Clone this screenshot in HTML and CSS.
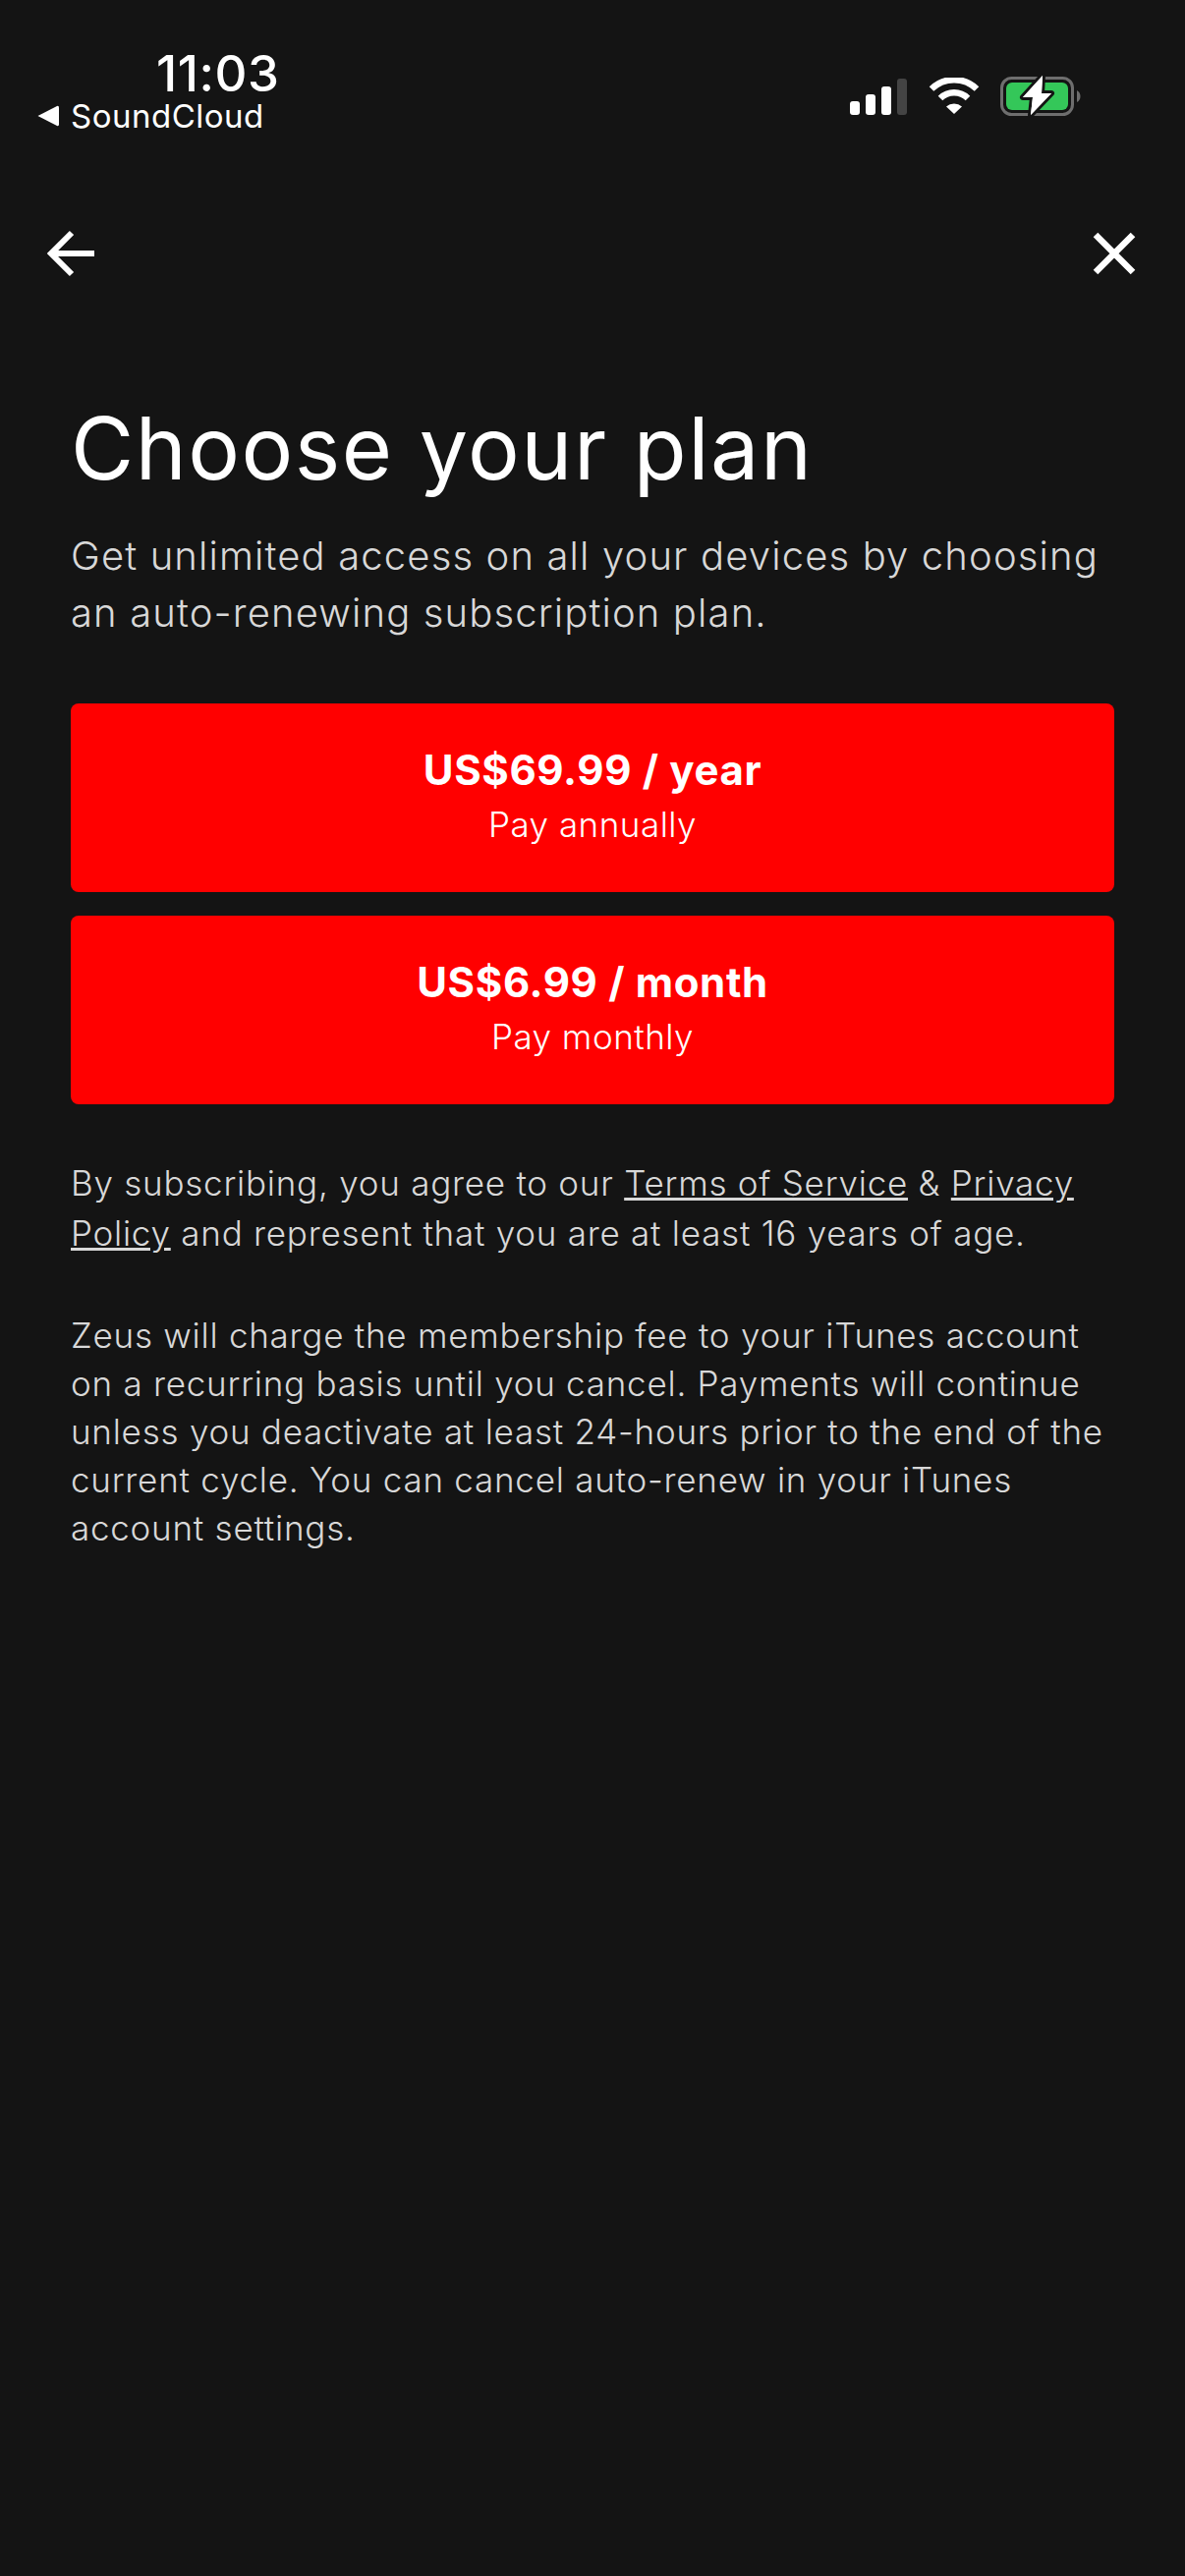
FILE: index.html
```html
<!DOCTYPE html>
<html lang="en">
<head>
    <meta charset="UTF-8">
    <meta name="viewport" content="width=device-width, initial-scale=1.0">
    <title>Choose your plan</title>
    <link rel="stylesheet" href="styles.css">
</head>
<body>
    <div class="status-bar">
        <div class="status-left">
            <div class="time">11:03</div>
            <div class="back-app">
                <svg class="back-triangle" width="22" height="22" viewBox="0 0 22 22"><path d="M0.5 11 L20 1 Q22 0.3 22 2.500 V19.500 Q22 21.700 20 21 Z" fill="#fff"/></svg>
                <span>SoundCloud</span>
            </div>
        </div>
        <div class="status-icons">
            <svg width="60" height="38" viewBox="0 0 60 38">
                <rect x="1" y="24" width="10" height="14" rx="3" fill="#fff"/>
                <rect x="17" y="17" width="10" height="21" rx="3" fill="#fff"/>
                <rect x="33" y="9" width="10" height="29" rx="3" fill="#fff"/>
                <rect x="49" y="1" width="10" height="37" rx="3" fill="#444"/>
            </svg>
            <svg width="52" height="38" viewBox="0 0 52 38">
                <path d="M3 11.5 A33 33 0 0 1 49 11.5" fill="none" stroke="#fff" stroke-width="6.5"/>
                <path d="M12 21 A20 20 0 0 1 40 21" fill="none" stroke="#fff" stroke-width="6.5"/>
                <path d="M26 37 L18 29.5 A12 12 0 0 1 34 29.5 Z" fill="#fff"/>
            </svg>
            <svg class="battery" width="82" height="40" viewBox="0 0 82 40">
                <rect x="1.5" y="1.5" width="72" height="37" rx="10" fill="none" stroke="#6e6e6e" stroke-width="3"/>
                <rect x="6" y="6" width="63" height="28" rx="6" fill="#34c759"/>
                <path d="M78 14 Q81.500 16 81.500 20 Q81.500 24 78 26 Z" fill="#6e6e6e"/>
                <path d="M43 -1 L23 21 H33 L31 39 L52 17 H42 Z" fill="#fff" stroke="#141414" stroke-width="6" stroke-linejoin="round" paint-order="stroke"/>
                <path d="M43 -1 L23 21 H33 L31 39 L52 17 H42 Z" fill="#fff"/>
            </svg>
        </div>
    </div>

    <div class="nav">
        <svg width="50" height="48" viewBox="0 0 50 48"><path d="M25 3 L4 24 L25 45 M4 24 H48" fill="none" stroke="#fff" stroke-width="6"/></svg>
        <svg width="44" height="44" viewBox="0 0 44 44"><path d="M3 3 L41 41 M41 3 L3 41" fill="none" stroke="#fff" stroke-width="6.500"/></svg>
    </div>

    <div class="content">
        <h1>Choose your plan</h1>
        <p class="intro">Get unlimited access on all your devices by choosing an auto-renewing subscription plan.</p>

        <div class="plans">
            <button class="plan">
                <span class="plan-price">US$69.99 / year</span>
                <span class="plan-note">Pay annually</span>
            </button>
            <button class="plan">
                <span class="plan-price">US$6.99 / month</span>
                <span class="plan-note">Pay monthly</span>
            </button>
        </div>

        <p class="legal legal-terms">By subscribing, you agree to our <a href="#">Terms of Service</a> &amp; <a href="#">Privacy</a> <a href="#">Policy</a> and represent that you are at least 16 years of age.</p>
        <p class="legal">Zeus will charge the membership fee to your iTunes account on a recurring basis until you cancel. Payments will continue unless you deactivate at least 24-hours prior to the end of the current cycle. You can cancel auto-renew in your iTunes account settings.</p>
    </div>
</body>
</html>
```

FILE: styles.css
```css
html, body {
    height: 100%;
}
body {
    margin: 0;
    background-color: #141414;
    color: #fff;
    font-family: Inter, "Liberation Sans", sans-serif;
}
.status-bar {
    display: flex;
    justify-content: space-between;
    align-items: flex-start;
    padding: 50px 106px 0 38px;
    height: 150px;
    box-sizing: border-box;
}
.status-left {
    display: flex;
    flex-direction: column;
    align-items: flex-start;
}
.time {
    margin-left: 121px;
    font-size: 51px;
    line-height: 50px;
    font-weight: 500;
    letter-spacing: 0.6px;
}
.back-app {
    display: flex;
    align-items: center;
    gap: 12px;
    font-size: 33px;
    line-height: 36px;
    letter-spacing: 0.5px;
}
.status-icons {
    display: flex;
    align-items: center;
    gap: 21px;
    margin-top: 28px;
}
.battery {
    overflow: visible;
}
.nav {
    display: flex;
    justify-content: space-between;
    align-items: center;
    padding: 84px 50px 0 48px;
}
.content {
    padding: 0 72px;
}
h1 {
    margin: 122px 0 0;
    font-size: 88px;
    line-height: 104px;
    font-weight: 400;
    letter-spacing: 1.5px;
}
.intro {
    margin: 29px 0 0;
    font-size: 40px;
    line-height: 58px;
    font-weight: 300;
    color: #d8d8d8;
    letter-spacing: 1.14px;
}
.plans {
    display: flex;
    flex-direction: column;
    gap: 24px;
    margin-top: 63px;
    margin-bottom: 55px;
}
.plan {
    display: flex;
    flex-direction: column;
    align-items: center;
    justify-content: center;
    width: 100%;
    height: 192px;
    padding: 0 0 3px;
    border: none;
    border-radius: 8px;
    background-color: #f00;
    color: #fff;
    font-family: inherit;
}
.plan-price {
    font-size: 42px;
    line-height: 56px;
    font-weight: 700;
    letter-spacing: 0.65px;
}
.plan-note {
    font-size: 35px;
    line-height: 54px;
    font-weight: 300;
    letter-spacing: 0.5px;
}
.legal {
    margin: 0 0 57px;
    font-size: 35px;
    line-height: 49px;
    font-weight: 300;
    color: #d8d8d8;
    letter-spacing: 0.75px;
}
.legal-terms {
    margin-bottom: 54px;
    line-height: 51px;
}
.legal a {
    color: inherit;
}
```
